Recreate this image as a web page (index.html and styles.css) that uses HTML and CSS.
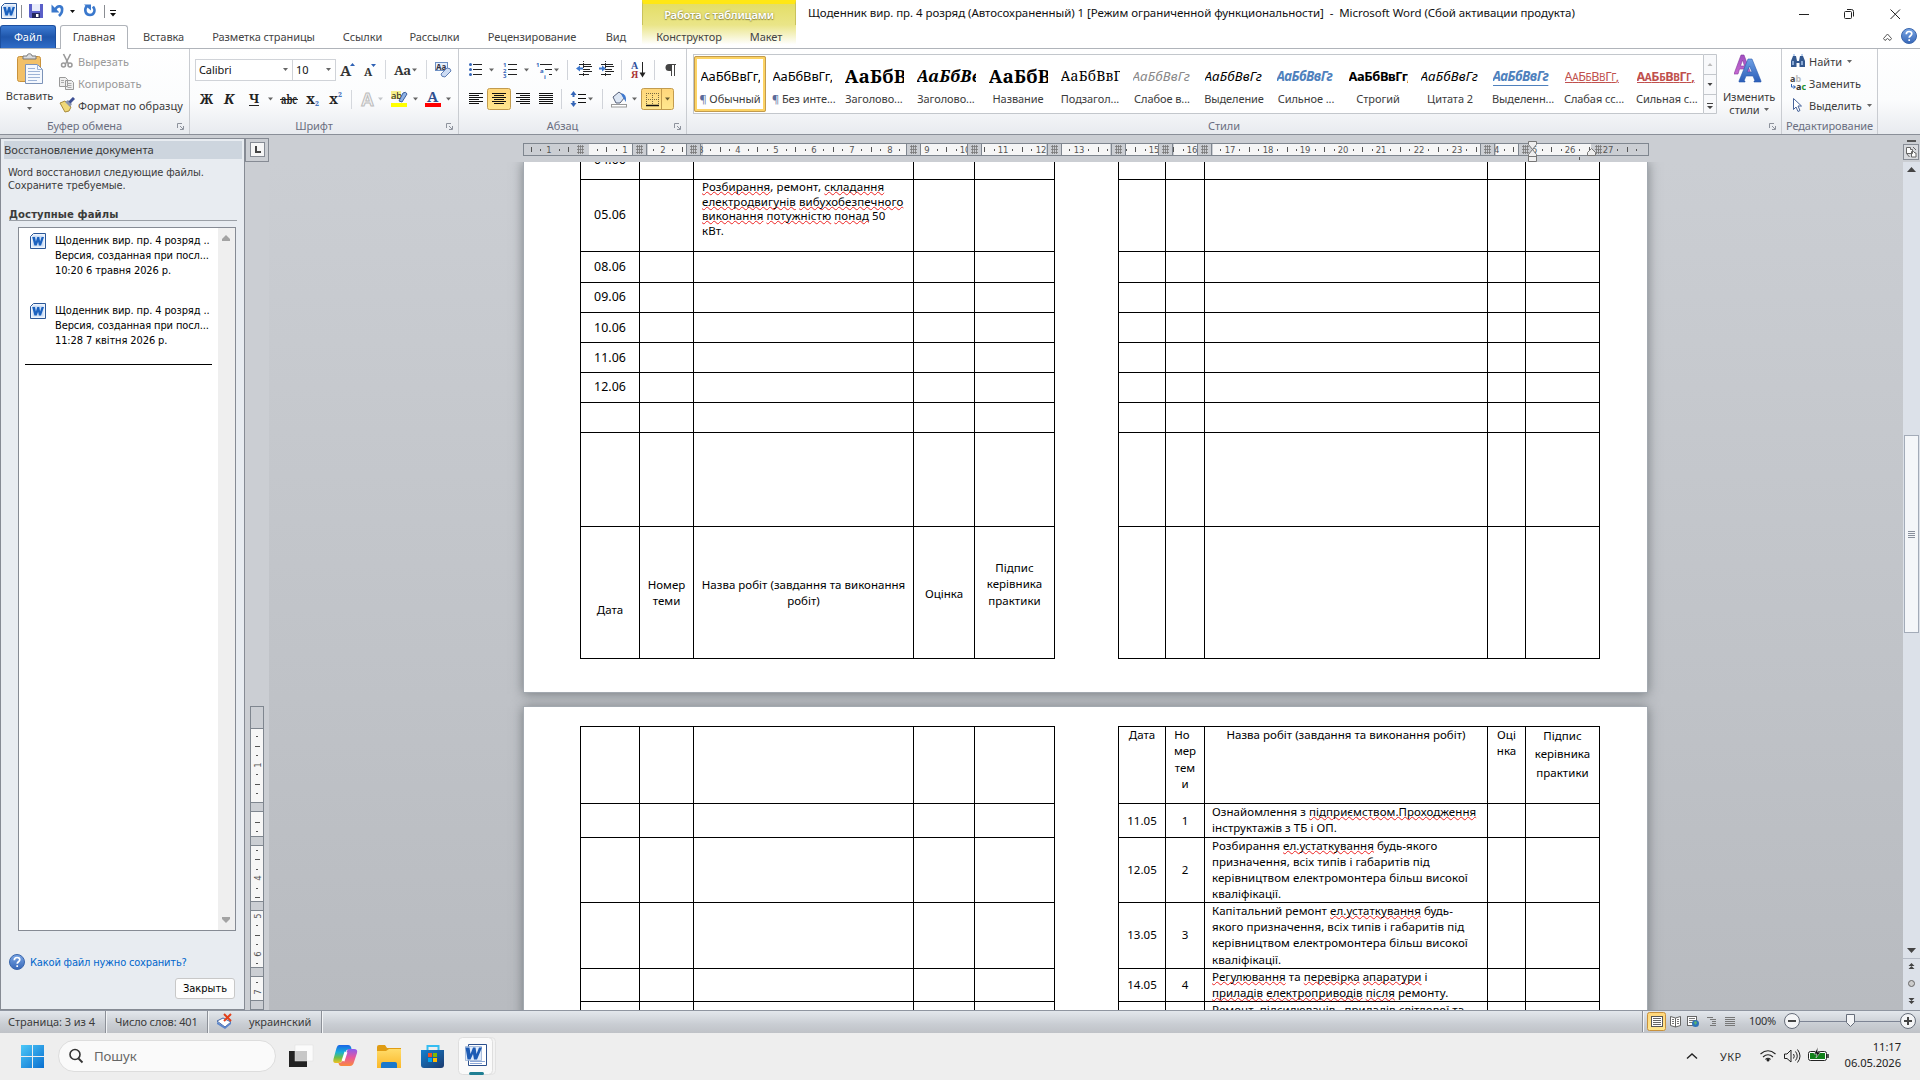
FILE: index.html
```html
<!DOCTYPE html>
<html lang="ru">
<head>
    <meta charset="UTF-8">
    <meta name="viewport" content="width=device-width, initial-scale=1.0">
    <title>Microsoft Word</title>
    <link rel="stylesheet" href="styles.css">
</head>
<body>

    <svg width="0" height="0" class="defs">
        <defs>
            <linearGradient id="gBlue" x1="0" y1="0" x2="0" y2="1"><stop offset="0" stop-color="#6fa0e4"/><stop offset="1" stop-color="#2a5db8"/></linearGradient>
            <linearGradient id="gHelp" x1="0" y1="0" x2="0" y2="1"><stop offset="0" stop-color="#7ba7e6"/><stop offset="1" stop-color="#3767b8"/></linearGradient>
            <linearGradient id="gWin" x1="0" y1="0" x2="1" y2="1"><stop offset="0" stop-color="#4cc8f8"/><stop offset="1" stop-color="#0a6fd0"/></linearGradient>
            <linearGradient id="gPurple" x1="0" y1="0" x2="0" y2="1"><stop offset="0" stop-color="#a04fc0"/><stop offset="1" stop-color="#c86ad0"/></linearGradient>
            <linearGradient id="gOn" x1="0" y1="0" x2="0" y2="1"><stop offset="0" stop-color="#ffd67a"/><stop offset="1" stop-color="#ffe78f"/></linearGradient>
            <linearGradient id="gCopA" x1="0" y1="0" x2="0" y2="1"><stop offset="0" stop-color="#1a63e8"/><stop offset=".4" stop-color="#18b0d8"/><stop offset=".7" stop-color="#6cc04a"/><stop offset="1" stop-color="#f4c020"/></linearGradient>
            <linearGradient id="gCopB" x1="0" y1="0" x2="0" y2="1"><stop offset="0" stop-color="#8a5cf0"/><stop offset=".5" stop-color="#e8589c"/><stop offset="1" stop-color="#fa8a3c"/></linearGradient>
            <linearGradient id="gFolder" x1="0" y1="0" x2="0" y2="1"><stop offset="0" stop-color="#ffdc6a"/><stop offset="1" stop-color="#fbb829"/></linearGradient>
            <linearGradient id="gStore" x1="0" y1="0" x2="1" y2="1"><stop offset="0" stop-color="#1480d0"/><stop offset="1" stop-color="#1b3a6e"/></linearGradient>
            <symbol id="word" viewBox="0 0 16 16">
                <path d="M3.5.5h12v15H.5v-12z" fill="#eef4fc" stroke="#2b5797"/>
                <rect x="2.5" y="2.500" width="11" height="11" fill="#c9dcf5"/>
                <path d="M2.200 4h2.800l.9 4.500L7.300 4h2l.8 4.500L11.600 4H14l-3 8.500H8.900L8.100 8.800 6.700 12.500H4.400z" fill="#1b62c0"/>
            </symbol>
            <symbol id="help" viewBox="0 0 16 16">
                <circle cx="8" cy="8" r="7.500" fill="url(#gHelp)" stroke="#3a66ac"/>
                <path d="M5.300 6.200c0-3.600 5.500-3.500 5.500-.4 0 1.900-2.600 2-2.600 4M8.200 11.200v1.800" fill="none" stroke="#fff" stroke-width="1.700"/>
            </symbol>
            <symbol id="launch" viewBox="0 0 7 7"><path d="M.5 5V.5H5M3 3l3 3M6.500 3v3.500H3" fill="none" stroke="#8d929c"/></symbol>
            <symbol id="dd" viewBox="0 0 5 3"><path d="M0 0h5L2.500 3z" fill="#666"/></symbol>
        </defs>
    </svg>

    <!-- Title bar -->
    <div class="titlebar">
        <svg class="quick" width="642" height="25" viewBox="0 0 642 25">
            <use href="#word" x="1" y="3" width="16" height="16"/>
            <path d="M21.500 5v13M104.500 5v13" stroke="#8a8d92"/>
            <path d="M29 4h14v14H30l-1-1z" fill="#5a5fc8"/><path d="M32 4h8v7h-8z" fill="#e8ecfa"/><path d="M32 13h8v5h-8z" fill="#23275e"/><path d="M36 14h2.500v3H36z" fill="#fff"/>
            <path d="M51.500 4.500v8h8z" fill="#3a78cc"/><path d="M55 10c3-6 8-4 7 1 0 2-1 3-3 5" fill="none" stroke="#3a78cc" stroke-width="2.600"/>
            <path d="M70 10h5l-2.500 3zM110 13h6l-3 3.500z" fill="#111"/><path d="M110 10.500h6" stroke="#111"/>
            <path d="M93 6.500c3 4 1 8.500-3 8.500-5 0-6-6-3-9" fill="none" stroke="#3a78cc" stroke-width="2.600"/><path d="M84 4.500h7v6z" fill="#3a78cc"/>
        </svg>
        <div class="ctx-title">Работа с таблицами</div>
        <div class="doc-title">Щоденник вир. пр. 4 розряд (Автосохраненный) 1 [Режим ограниченной функциональности]&nbsp; -&nbsp; Microsoft Word (Сбой активации продукта)</div>
        <svg class="win-buttons" width="130" height="25" viewBox="1790 0 130 25">
            <path d="M1799 14.500h10M1890.500 9.500l9.500 9.500M1900 9.500l-9.500 9.500" stroke="#222" fill="none"/>
            <path d="M1847 9.500h4.500q2 0 2 2v5" stroke="#222" fill="none"/>
            <rect x="1844.500" y="11.500" width="7" height="7" rx="1" stroke="#222" fill="none"/>
        </svg>
    </div>

    <!-- Tabs -->
    <div class="tabs">
        <div class="tab file">Файл</div>
        <div class="tab active">Главная</div>
        <div class="tab w69">Вставка</div>
        <div class="tab w131">Разметка страницы</div>
        <div class="tab w67">Ссылки</div>
        <div class="tab w77">Рассылки</div>
        <div class="tab w118">Рецензирование</div>
        <div class="tab w50">Вид</div>
        <div class="ctx-tabs">
            <div class="tab w94">Конструктор</div>
            <div class="tab w60">Макет</div>
        </div>
        <svg class="tabs-right" width="40" height="24" viewBox="1880 25 40 24">
            <path d="M1883.500 38.500l4-4.500 4 4.500-1.500 2-2.500-2-2.500 2z" fill="none" stroke="#555"/>
            <use href="#help" x="1901" y="28" width="16" height="16"/>
        </svg>
    </div>

    <!-- Ribbon -->
    <div class="ribbon">
        <div class="group g-clip">
            <div class="tools">
                <div class="big-btn paste">
                    <svg width="30" height="34" viewBox="0 0 30 34">
                        <rect x="2.500" y="3.500" width="23" height="25" rx="2" fill="#f2c068" stroke="#c8923c"/>
                        <path d="M8 6V3h4c0-3 5-3 5 0h4v3z" fill="#d8dade" stroke="#777"/>
                        <path d="M10.500 11.500h12l5 5v14h-17z" fill="#f4f8fe" stroke="#7c93b8"/>
                        <path d="M22.500 11.500v5h5M13 15.500h7M13 18.500h12M13 21.500h12M13 24.500h12M13 27.500h9" fill="none" stroke="#9db3d6"/>
                    </svg>
                    <span>Вставить</span>
                    <svg class="dd" width="5" height="3"><use href="#dd"/></svg>
                </div>
                <div class="small-col">
                    <div class="small-btn off"><svg width="16" height="16"><path d="M4.500 1l5 10M11.500 1l-5 10" stroke="#999" stroke-width="1.600"/><circle cx="4.500" cy="12" r="2" fill="none" stroke="#999" stroke-width="1.500"/><circle cx="11" cy="12" r="2" fill="none" stroke="#999" stroke-width="1.500"/></svg>Вырезать</div>
                    <div class="small-btn off"><svg width="16" height="16"><path d="M.5 2.500h6l2 2v7h-8zM6.500 5.500h6l2 2v7h-8z" fill="#eee" stroke="#999"/><path d="M8.500 8.500h4M8.500 10.500h4M8.500 12.500h4M2 5.500h3M2 7.500h3" stroke="#aaa"/></svg>Копировать</div>
                    <div class="small-btn"><svg width="16" height="16"><path d="M1 6l5-2 6 6-2 4-4 1z" fill="#f0d878" stroke="#a88a3a"/><path d="M6 5l3-2 4 4-2 3z" fill="#8a93b0"/><path d="M10.500 5.500L15 1" stroke="#3c4f94" stroke-width="3"/></svg>Формат по образцу</div>
                </div>
            </div>
            <div class="group-label">Буфер обмена<svg class="launcher" width="7" height="7"><use href="#launch"/></svg></div>
        </div>

        <div class="group g-font">
            <div class="tools rows">
                <div class="font-row">
                    <div class="combo font-name">Calibri<svg width="5" height="3"><use href="#dd"/></svg></div>
                    <div class="combo font-size">10<svg width="5" height="3"><use href="#dd"/></svg></div>
                    <svg width="122" height="22" viewBox="336 59 122 22">
                        <g font-family="Noto Serif, Liberation Serif, serif" font-weight="bold" fill="#333">
                            <text x="340" y="76" font-size="15">A</text>
                            <text x="364" y="76" font-size="11">A</text>
                            <text x="394" y="75" font-size="13" letter-spacing="-.5">Aa</text>
                        </g>
                        <path d="M350 66l2.500-3 2.500 3zM371 64h5l-2.500 3z" fill="#2f62b5"/>
                        <path d="M385.500 60v19M426.500 60v19" stroke="#d5d8dd"/>
                        <path d="M412 68.500h5l-2.500 3z" fill="#666"/>
                        <rect x="435.500" y="62.500" width="12" height="8" fill="#e6effb" stroke="#6d8fc4"/>
                        <text x="436" y="70" font-size="8" font-family="Noto Sans, sans-serif" font-weight="bold" fill="#334">Aa</text>
                        <path d="M441 74l6-6q4 0 4 3l-6 6q-4 0-4-3z" fill="#cddcf4" stroke="#5f7fb6"/>
                    </svg>
                </div>
                <svg class="row-two" width="268" height="24" viewBox="190 87 268 24">
                    <g font-family="Noto Serif, Liberation Serif, serif" font-weight="bold" fill="#222" font-size="14">
                        <text x="200" y="104" textLength="13" lengthAdjust="spacingAndGlyphs">Ж</text>
                        <text x="224" y="104" font-style="italic">К</text>
                        <text x="249" y="103" font-size="13">Ч</text>
                        <text x="281" y="104" font-size="12" textLength="16" lengthAdjust="spacingAndGlyphs">abc</text>
                        <text x="306" y="104">x</text><text x="329" y="104">x</text>
                        <text x="315" y="106" font-size="7" fill="#2f62b5">2</text><text x="338" y="97" font-size="7" fill="#2f62b5">2</text>
                        <text x="427" y="102" font-size="15" fill="#2f4f8f">A</text>
                    </g>
                    <path d="M249 105.500h10M280 99.500h18" stroke="#222"/>
                    <path d="M268 97.500h5l-2.500 3zM413 97.500h5l-2.500 3zM446 97.500h5l-2.500 3z" fill="#666"/>
                    <path d="M378 97.500h5l-2.500 3z" fill="#c4c6ca"/>
                    <path d="M351.500 90v19" stroke="#d5d8dd"/>
                    <text x="361" y="106" font-size="18" font-weight="bold" font-family="Liberation Sans, sans-serif" fill="#f3f3f3" stroke="#bcbcbc">A</text>
                    <path d="M391 91h10v8h-10z" fill="#f6f08a"/>
                    <text x="391" y="99" font-size="9.500" font-family="Noto Sans, sans-serif" fill="#222">ab</text>
                    <path d="M399 101l4-8q3-2 4 1l-5 8z" fill="#8fb2e4" stroke="#3c5e9c"/>
                    <path d="M391 103h16v4h-16z" fill="#ff0"/><path d="M425 103h16v4h-16z" fill="#f00"/>
                </svg>
            </div>
            <div class="group-label">Шрифт<svg class="launcher" width="7" height="7"><use href="#launch"/></svg></div>
        </div>

        <div class="group g-para">
            <svg class="tools" width="227" height="68" viewBox="459 49 227 68">
                <path d="M473 64.500h9M473 69.500h9M473 74.500h9M508 64.500h9M508 69.500h9M508 74.500h9M540 64.500h12M545 69.500h7M549 74.500h3" stroke="#222"/>
                <g fill="#3566b8"><circle cx="470.500" cy="64.500" r="1.500"/><circle cx="470.500" cy="69.500" r="1.500"/><circle cx="470.500" cy="74.500" r="1.500"/></g>
                <g font-family="Noto Sans, sans-serif" font-weight="bold" font-size="6" fill="#3566b8"><text x="503" y="67">1</text><text x="503" y="72.500">2</text><text x="503" y="78">3</text><text x="536" y="67">1</text><text x="540" y="73">a</text><text x="544" y="79">i</text></g>
                <g fill="#666"><path d="M489 68.500h5l-2.500 3zM524 68.500h5l-2.500 3zM554 68.500h5l-2.500 3zM588 97.500h5l-2.500 3zM632 97.500h5l-2.500 3z"/></g>
                <path d="M567.500 60v20M621.500 60v20M654.500 60v20M561.500 89v20M602.500 89v20" stroke="#d0d3d9"/>
                <path d="M579 64.500h12M583 66.500h9M583 69.500h7M583 71.500h9M579 74.500h10M601 64.500h12M605 66.500h9M605 69.500h7M605 71.500h9M601 74.500h10" stroke="#222"/>
                <path d="M583.500 61v16M605.500 61v16" stroke="#333" stroke-dasharray="1 1"/>
                <path d="M576 68.500l4-3v2h3v2h-3v2zM606 68.500l-4-3v2h-3v2h3v2z" fill="#3f79cf"/>
                <g font-family="Liberation Serif, serif" font-weight="bold" font-size="10"><text x="631" y="69" fill="#2f4f9b">A</text><text x="631" y="78" fill="#a33">Я</text></g>
                <path d="M642.500 62v13" stroke="#222"/><path d="M639.500 72.500h6l-3 5z" fill="#222"/>
                <path d="M671.500 64v12M674.500 64v12M669 64.500h7" stroke="#444" fill="none"/><path d="M671 64h-2a3 3 0 0 0 0 7h2z" fill="#444"/>

                <rect x="487.500" y="88.500" width="23" height="21" rx="2" fill="url(#gOn)" stroke="#c29b4e"/>
                <rect x="641.500" y="88.500" width="32" height="21" rx="2" fill="url(#gOn)" stroke="#c29b4e"/>
                <path d="M661.500 89v20" stroke="#c29b4e"/><path d="M665 97.500h5l-2.500 3z" fill="#665a30"/>
                <path d="M469 93.500h14M469 95.500h10M469 97.500h14M469 99.500h10M469 101.500h14M469 103.500h10" stroke="#111"/>
                <path d="M492 93.500h14M494 95.500h10M492 97.500h14M494 99.500h10M492 101.500h14M494 103.500h10" stroke="#111"/>
                <path d="M516 93.500h14M520 95.500h10M516 97.500h14M520 99.500h10M516 101.500h14M520 103.500h10" stroke="#111"/>
                <path d="M539 93.500h14M539 95.500h14M539 97.500h14M539 99.500h14M539 101.500h14M539 103.500h14" stroke="#111"/>
                <path d="M578 94.500h8M578 98.500h8M578 102.500h8" stroke="#111"/>
                <path d="M573.500 91l3 4h-2v2h-2v-2h-2zM573.500 107l3-4h-2v-2h-2v2h-2z" fill="#3566b8"/>
                <path d="M613 97l6-5 6 5-5 6h-4z" fill="#dce6f4" stroke="#555f78"/><path d="M621 93q6 1 5 9l-4-6z" fill="#3f79cf"/>
                <rect x="611.500" y="104.500" width="15" height="2.500" fill="#fff" stroke="#999"/>
                <path d="M646 93.500h13M646 99.500h13M646.500 93v12M652.500 93v12M658.500 93v12" stroke="#7a6a40" stroke-dasharray="1 1"/><path d="M646 105.500h13" stroke="#111" stroke-width="1.500"/>
            </svg>
            <div class="group-label">Абзац<svg class="launcher" width="7" height="7"><use href="#launch"/></svg></div>
        </div>

        <div class="group g-styles">
            <div class="tools">
                <div class="gallery">
                    <div class="style on"><b class="s-norm">АаБбВвГг,</b><span><i>¶</i> Обычный</span></div>
                    <div class="style"><b class="s-norm">АаБбВвГг,</b><span><i>¶</i> Без инте...</span></div>
                    <div class="style"><b class="s-head">АаБбВ</b><span>Заголово...</span></div>
                    <div class="style"><b class="s-head2">АаБбВв</b><span>Заголово...</span></div>
                    <div class="style"><b class="s-head">АаБбВ</b><span>Название</span></div>
                    <div class="style"><b class="s-sub">АаБбВвГ</b><span>Подзагол...</span></div>
                    <div class="style"><b class="s-em s-gray">АаБбВвГг</b><span>Слабое в...</span></div>
                    <div class="style"><b class="s-em">АаБбВвГг</b><span>Выделение</span></div>
                    <div class="style"><b class="s-em s-blue">АаБбВвГг</b><span>Сильное ...</span></div>
                    <div class="style"><b class="s-strong">АаБбВвГг,</b><span>Строгий</span></div>
                    <div class="style"><b class="s-em">АаБбВвГг</b><span>Цитата 2</span></div>
                    <div class="style"><b class="s-em s-blue s-line">АаБбВвГг</b><span>Выделенн...</span></div>
                    <div class="style"><b class="s-ref">А<small>А</small>Б<small>Б</small>В<small>В</small>Г<small>Г</small>,</b><span>Слабая сс...</span></div>
                    <div class="style"><b class="s-ref s-bold">А<small>А</small>Б<small>Б</small>В<small>В</small>Г<small>Г</small>,</b><span>Сильная с...</span></div>
                </div>
                <svg class="gallery-scroll" width="14" height="60" viewBox="0 0 14 60">
                    <path d="M.5.5h13v59H.5zM0 20.500h14M0 40.500h14" fill="#f8f9fb" stroke="#c3c7cc"/>
                    <path d="M4.500 12h5L7 9z" fill="#bbb"/><path d="M4.500 29h5L7 32zM4 52h6l-3 3z" fill="#444"/><path d="M4 49.500h6" stroke="#444"/>
                </svg>
                <div class="big-btn change">
                    <svg width="30" height="30" viewBox="0 0 30 30">
                        <path d="M0 20L7 1h3l7 19h-4l-1.500-5h-6L4 20zM6.500 12h4L8.500 6z" fill="url(#gPurple)" stroke="#83389e" stroke-width=".6"/>
                        <path d="M5 28v-1L14 5h4l9 22v1h-7v-1h1l-2-5h-7l-2 5h1v1zM13 18h5l-2.500-6z" fill="url(#gBlue)" stroke="#2c5cae" stroke-width=".6"/>
                    </svg>
                    <span>Изменить</span>
                    <span>стили <svg width="5" height="3"><use href="#dd"/></svg></span>
                </div>
            </div>
            <div class="group-label">Стили<svg class="launcher" width="7" height="7"><use href="#launch"/></svg></div>
        </div>

        <div class="group g-edit">
            <div class="tools">
                <div class="small-col">
                    <div class="small-btn"><svg width="16" height="16"><path d="M1 14V8l2-5h3l1 5h2l1-5h3l2 5v6H9.500v-4h-3v4z" fill="#33588f"/><path d="M3 8v4M12 8v4M4 1v2M12 1v2" stroke="#a8c4ec" stroke-width="1.500"/></svg>Найти<svg class="dd" width="5" height="3"><use href="#dd"/></svg></div>
                    <div class="small-btn"><svg width="16" height="16"><text x="0" y="7" font-size="9" font-weight="bold" font-family="Noto Sans, sans-serif" fill="#444">a<tspan fill="#bbb">b</tspan></text><text x="6" y="15" font-size="9" font-weight="bold" font-family="Noto Sans, sans-serif" fill="#333">a<tspan fill="#1d8f2f">c</tspan></text><path d="M1.500 9v3H5M3.500 10.500l2 1.500-2 1.500" fill="none" stroke="#2f62b5"/></svg>Заменить</div>
                    <div class="small-btn"><svg width="16" height="16"><path d="M3.500 1.500v11l2.500-2.500 2 4.500 2-1-2-4.500h3.500z" fill="#fff" stroke="#47639a"/></svg>Выделить<svg class="dd" width="5" height="3"><use href="#dd"/></svg></div>
                </div>
            </div>
            <div class="group-label">Редактирование</div>
        </div>
    </div>

    <!-- Work area -->
    <div class="work">
        <div class="pane">
            <div class="pane-head">Восстановление документа</div>
            <p class="pane-text">Word восстановил следующие файлы. Сохраните требуемые.</p>
            <div class="pane-sub">Доступные файлы</div>
            <div class="file-box">
                <div class="files">
                    <div class="file-item">
                        <svg width="16" height="16"><use href="#word"/></svg>
                        <div>Щоденник вир. пр. 4 розряд ..<br>Версия, созданная при посл...<br>10:20 6 травня 2026 р.</div>
                    </div>
                    <div class="file-item">
                        <svg width="16" height="16"><use href="#word"/></svg>
                        <div>Щоденник вир. пр. 4 розряд ..<br>Версия, созданная при посл...<br>11:28 7 квітня 2026 р.</div>
                    </div>
                    <div class="files-line"></div>
                </div>
                <div class="files-scroll">
                    <svg width="10" height="6"><path d="M5 0l4 4v2H1V4z" fill="#a3a3a3"/></svg>
                    <svg width="10" height="6"><path d="M5 6l4-4V0H1v2z" fill="#a3a3a3"/></svg>
                </div>
            </div>
            <div class="pane-help"><svg width="16" height="16"><use href="#help"/></svg>Какой файл нужно сохранить?</div>
            <button class="close-btn">Закрыть</button>
        </div>

        <div class="vruler-col">
            <svg width="24" height="24" class="tab-kind"><rect x=".5" y=".5" width="23" height="23" fill="#cbced3" stroke="#868b94"/><rect x="5.500" y="4.500" width="14" height="14" fill="#f6f6f6" stroke="#868b94"/><path d="M11 8v6h5" fill="none" stroke="#444" stroke-width="2"/></svg>
            <svg id="vruler" class="vruler" width="24" height="304" viewBox="245 706 24 304"></svg>
        </div>

        <div class="canvas">
            <svg id="hruler" class="hruler" width="1634" height="27" viewBox="269 135 1634 27"></svg>
            <div class="view">
                <div class="page page-one">
                    <table class="left no-top">
                        <tr class="h18"><td><div class="cut">04.06</div></td><td></td><td></td><td></td><td></td></tr>
                        <tr class="h72"><td>05.06</td><td></td><td class="task tight"><u>Розбирання</u>, ремонт, <u>складання</u><br><u>електродвигунів</u> <u>вибухобезпечного</u><br><u>виконання</u> <u>потужністю</u> <u>понад</u> 50<br>кВт.</td><td></td><td></td></tr>
                        <tr class="h31"><td>08.06</td><td></td><td></td><td></td><td></td></tr>
                        <tr class="h30"><td>09.06</td><td></td><td></td><td></td><td></td></tr>
                        <tr class="h30 low"><td>10.06</td><td></td><td></td><td></td><td></td></tr>
                        <tr class="h30 low"><td>11.06</td><td></td><td></td><td></td><td></td></tr>
                        <tr class="h30"><td>12.06</td><td></td><td></td><td></td><td></td></tr>
                        <tr class="h30"><td></td><td></td><td></td><td></td><td></td></tr>
                        <tr class="h94"><td></td><td></td><td></td><td></td><td></td></tr>
                        <tr class="h132 head"><td class="p75">Дата</td><td class="p50">Номер<br>теми</td><td class="p50">Назва робіт (завдання та виконання<br>робіт)</td><td class="p59">Оцінка</td><td class="p33">Підпис<br>керівника<br>практики</td></tr>
                    </table>
                    <table class="right no-top">
                        <tr class="h18"><td></td><td></td><td></td><td></td><td></td></tr>
                        <tr class="h72"><td></td><td></td><td></td><td></td><td></td></tr>
                        <tr class="h31"><td></td><td></td><td></td><td></td><td></td></tr>
                        <tr class="h30"><td></td><td></td><td></td><td></td><td></td></tr>
                        <tr class="h30"><td></td><td></td><td></td><td></td><td></td></tr>
                        <tr class="h30"><td></td><td></td><td></td><td></td><td></td></tr>
                        <tr class="h30"><td></td><td></td><td></td><td></td><td></td></tr>
                        <tr class="h30"><td></td><td></td><td></td><td></td><td></td></tr>
                        <tr class="h94"><td></td><td></td><td></td><td></td><td></td></tr>
                        <tr class="h132"><td></td><td></td><td></td><td></td><td></td></tr>
                    </table>
                </div>
                <div class="page page-two">
                    <table class="left">
                        <tr class="h77"><td></td><td></td><td></td><td></td><td></td></tr>
                        <tr class="h34"><td></td><td></td><td></td><td></td><td></td></tr>
                        <tr class="h65"><td></td><td></td><td></td><td></td><td></td></tr>
                        <tr class="h66"><td></td><td></td><td></td><td></td><td></td></tr>
                        <tr class="h33"><td></td><td></td><td></td><td></td><td></td></tr>
                        <tr class="h34"><td></td><td></td><td></td><td></td><td></td></tr>
                    </table>
                    <table class="right">
                        <tr class="h77 head"><td>Дата</td><td>Но&nbsp;&nbsp;<br>мер<br>тем<br>и</td><td>Назва робіт (завдання та виконання робіт)</td><td>Оці<br>нка</td><td class="loose">Підпис<br>керівника<br>практики</td></tr>
                        <tr class="h34 low"><td>11.05</td><td>1</td><td class="task">Ознайомлення з <u>підприємством.Проходження</u><br>інструктажів з ТБ і ОП.</td><td></td><td></td></tr>
                        <tr class="h65 low"><td>12.05</td><td>2</td><td class="task four">Розбирання <u>ел.устаткування</u> будь-якого<br>призначення, всіх типів і габаритів під<br>керівництвом електромонтера більш високої<br>кваліфікації.</td><td></td><td></td></tr>
                        <tr class="h66"><td>13.05</td><td>3</td><td class="task">Капітальний ремонт <u>ел.устаткування</u> будь-<br>якого призначення, всіх типів і габаритів під<br>керівництвом електромонтера більш високої<br>кваліфікації.</td><td></td><td></td></tr>
                        <tr class="h33"><td>14.05</td><td>4</td><td class="task four"><u>Регулювання</u> та <u>перевірка</u> <u>апаратури</u> і<br><u>приладів</u> <u>електроприводів</u> <u>після</u> ремонту.</td><td></td><td></td></tr>
                        <tr class="h34"><td></td><td></td><td class="task">Ремонт&nbsp; підсилювачів,&nbsp; приладів світлової та</td><td></td><td></td></tr>
                    </table>
                </div>
            </div>
        </div>

        <svg class="vscroll" width="17" height="875" viewBox="1903 135 17 875">
            <rect x="1903" y="135" width="17" height="875" fill="#dce1e9"/>
            <path d="M1903 135h17v27h-17z" fill="#cbced3"/>
            <path d="M1907 141h9" stroke="#555" stroke-width="2"/>
            <rect x="1903.500" y="144.500" width="15" height="15" fill="#d8dade" stroke="#868b94"/><path d="M1906.500 147.500h4v2h2v4h-6zM1911.500 151.500h2l1.500 1.500h1v4h-4.500z" fill="#fff" stroke="#666"/><path d="M1906.500 153.500l3 3.500M1913 147l3 3" stroke="#666"/>
            <path d="M1907 172h9l-4.500-5z" fill="#444"/>
            <rect x="1904.500" y="435.500" width="14" height="197" fill="#f4f6f9" stroke="#a3abb8"/>
            <path d="M1908 531.500h7M1908 533.500h7M1908 535.500h7M1908 537.500h7" stroke="#888f9c"/>
            <path d="M1907 948h9l-4.500 5z" fill="#444"/>
            <path d="M1903 958.500h17" stroke="#b5bbc6"/>
            <path d="M1908.500 966h6l-3-3zM1908.500 969h6l-3-3zM1908.500 998h6l-3 3zM1908.500 1001h6l-3 3z" fill="#444"/>
            <circle cx="1911.500" cy="983.500" r="3" fill="#ccc" stroke="#666"/>
        </svg>
    </div>

    <!-- Status bar -->
    <div class="status">
        <div class="st st-page">Страница: 3 из 4</div>
        <div class="st st-words">Число слов: 401</div>
        <div class="st st-lang">
            <svg width="18" height="16"><path d="M1 8l6-3 8 4-6 5z" fill="#fff" stroke="#4468a8"/><path d="M1 9l8 5 6-5v2l-6 5-8-5z" fill="#5b85cc"/><path d="M8 1l7 7M15 1L8 8" stroke="#e2401c" stroke-width="2"/></svg>
            украинский
        </div>
        <svg class="st-right" width="280" height="23" viewBox="1640 1010 280 23">
            <path d="M1642.500 1011v21" stroke="#8c9098"/><path d="M1643.500 1011v21" stroke="#f2f4f6"/>
            <rect x="1647.500" y="1012.500" width="18" height="18" rx="2" fill="url(#gOn)" stroke="#c8913c"/>
            <rect x="1651.500" y="1016.500" width="11" height="10" fill="#fff" stroke="#555"/><path d="M1653 1018.500h8M1653 1020.500h8M1653 1022.500h8M1653 1024.500h8" stroke="#666"/>
            <path d="M1670.500 1016.500l5 1.500 5-1.500v9l-5 1.500-5-1.500zM1675.500 1018v9" fill="#fff" stroke="#666"/><path d="M1672 1019.500h2M1672 1021.500h2M1672 1023.500h2M1677 1019.500h2M1677 1021.500h2M1677 1023.500h2" stroke="#777"/>
            <rect x="1687.500" y="1016.500" width="9" height="9" fill="#fff" stroke="#666"/><path d="M1689 1018.500h6M1689 1020.500h6M1689 1022.500h4" stroke="#777"/><circle cx="1695.500" cy="1023.500" r="3.500" fill="#2f74b8"/><path d="M1694 1022l2-1 1 2-2 2z" fill="#5ab46a"/>
            <path d="M1707 1017.500h6M1710 1019.500h6M1712 1021.500h4M1712 1023.500h4M1710 1025.500h6" stroke="#777"/>
            <path d="M1725 1017.500h10M1725 1019.500h10M1725 1021.500h10M1725 1023.500h10M1725 1025.500h10" stroke="#777"/>
            <text x="1749" y="1025" class="svg-ui" textLength="27">100%</text>
            <path d="M1800 1021.500h100" stroke="#7d8494"/>
            <circle cx="1792" cy="1021" r="7.500" fill="#f3f4f6" stroke="#666d7a"/><path d="M1788 1021h8" stroke="#444" stroke-width="2"/>
            <circle cx="1908" cy="1021" r="7.500" fill="#f3f4f6" stroke="#666d7a"/><path d="M1904 1021h8M1908 1017v8" stroke="#444" stroke-width="2"/>
            <path d="M1846.500 1014.500h8v8l-4 4-4-4z" fill="#f3f4f6" stroke="#666d7a"/>
        </svg>
    </div>

    <!-- Taskbar -->
    <div class="taskbar">
        <svg class="start" width="23" height="23"><path d="M0 0h11v11H0zM12 0h11v11H12zM0 12h11v11H0zM12 12h11v11H12z" fill="url(#gWin)"/></svg>
        <div class="search">
            <svg width="16" height="16"><circle cx="7" cy="6.500" r="5" fill="none" stroke="#333" stroke-width="1.600"/><path d="M10.500 10.500l4 4" stroke="#333" stroke-width="1.800"/></svg>
            Пошук
        </div>
        <svg class="apps" width="220" height="47" viewBox="280 1033 220 47">
            <rect x="289" y="1051" width="18" height="16" fill="#222"/><rect x="295" y="1045" width="18" height="16" fill="#fff" fill-opacity=".75" stroke="#ddd" stroke-width=".5"/>
            <path d="M339 1045h9q3 0 3.500 4l-5 1-4 10q-1 3-4 3h-3q-3 0-2-4l3-11q1-3 2.500-3z" fill="url(#gCopA)"/>
            <path d="M348 1049h6q4 0 3 4l-3 9q-1 4-4 4h-9q-2 0-2.500-3 4 0 5-4z" fill="url(#gCopB)"/>
            <path d="M346 1052l-3 9" stroke="#fff" stroke-width="3"/>
            <path d="M377 1047q0-2 2-2h6l2 3h14v5h-24z" fill="#e09c13"/><path d="M377 1051h9l3-2h12v19h-24z" fill="url(#gFolder)"/><path d="M381 1068v-4q0-2 2-2h12q2 0 2 2v4z" fill="#1a78cc"/>
            <path d="M427.500 1050v-4h11v4" fill="none" stroke="#35bdf2" stroke-width="2"/><path d="M421 1050h23v15q0 3-3 3h-17q-3 0-3-3z" fill="url(#gStore)"/>
            <path d="M428 1053h4v4h-4z" fill="#f25022"/><path d="M433 1053h4v4h-4z" fill="#7fba00"/><path d="M428 1058h4v4h-4z" fill="#00a4ef"/><path d="M433 1058h4v4h-4z" fill="#ffb900"/>
            <rect x="461.500" y="1037.500" width="34" height="37" rx="4" fill="#f3f3f3" stroke="#e2e2e2"/>
            <rect x="458.500" y="1037.500" width="34" height="37" rx="4" fill="#fafafa" stroke="#dedede"/>
            <path d="M468.500 1044.500h18v21h-18z" fill="#fff" stroke="#2b4f8c"/><path d="M470 1061.500h15M470 1063.500h12" stroke="#8aa6d6"/>
            <path d="M465.500 1046.500h16v14h-16z" fill="#dfeafa" stroke="#7c9ac8" stroke-width=".6"/>
            <path d="M465.500 1047.500h4l1 6.500 2.500-6.500h2.500l1 6.500 2.500-6.500h3l-5 12h-3l-1-5.500-2.500 5.500h-3z" fill="#1d5bb4"/>
            <rect x="469" y="1072" width="15" height="3" rx="1.500" fill="#1f7f93"/>
        </svg>
        <svg class="tray" width="150" height="47" viewBox="1684 1033 150 47">
            <path d="M1687 1058.500l5-4.500 5 4.500" fill="none" stroke="#222" stroke-width="1.400"/>
            <text x="1720" y="1061" class="svg-ui" textLength="21">УКР</text>
            <path d="M1760.500 1054q7.500-6.500 15 0M1763 1057q5-4.500 10 0M1765.500 1059.500q2.500-2.500 5 0" fill="none" stroke="#222" stroke-width="1.100"/><circle cx="1768" cy="1060" r="1.500" fill="#222"/>
            <path d="M1784.500 1054v4.500h2.500l4 3.500v-12l-4 4z" fill="none" stroke="#222"/><path d="M1793.500 1054q1.500 2.200 0 4.500M1795.500 1051.500q3.500 4.700 0 9M1797.500 1049.500q5 6.700 0 13" fill="none" stroke="#222"/>
            <rect x="1808.500" y="1051.500" width="18" height="9" rx="2" fill="#fff" stroke="#222"/><rect x="1810" y="1053" width="15" height="6" fill="#12801a"/><path d="M1828 1054v4" stroke="#222" stroke-width="1.500"/><path d="M1818 1047l-4 7h3l-1 4 4.500-6h-3z" fill="#111" stroke="#fff" stroke-width=".5"/>
        </svg>
        <div class="clock">11:17<br>06.05.2026</div>
    </div>

    <script>
        // Rulers: one centimetre is 37.8px, marks every quarter
        const CM = 37.8;

        function drawHorizontal() {
            const start = 587.2;
            const white = [[589, 632], [648, 687], [703, 907], [921, 967], [982, 1046], [1062, 1110], [1126, 1158], [1174, 1197], [1213, 1480], [1496, 1518], [1534, 1591]];
            const marks = [639, 693, 913, 974, 1054, 1118, 1165, 1204, 1487, 1525];
            let s = '<rect x="523.5" y="143.5" width="1125" height="12" fill="#cbced3" stroke="#7f868f"/>';
            white.forEach(([a, b]) => { s += `<rect x="${a}" y="144" width="${b - a}" height="11" fill="#f6f6f6"/>`; });
            s += '<g class="ruler-num">';
            for (let q = -6; q <= 111; q++) {
                const x = Math.round(start + q * CM / 4);
                if (q === 0 || q === -1) continue;
                if (q % 4 === 0) {
                    // labels that fall under a column marker are left out
                    if (!marks.some(m => Math.abs(m - x) < 6)) s += `<text x="${x}" y="153">${Math.abs(q / 4)}</text>`;
                }
                else if (q % 2 === 0) s += `<rect x="${x}" y="147" width="1" height="5"/>`;
                else s += `<rect x="${x}" y="149" width="1" height="2"/>`;
            }
            s += '</g>';
            marks.forEach(m => {
                s += `<rect x="${m - 6.5}" y="143.5" width="14" height="12" fill="#cbced3" stroke="#7f868f"/>`;
            });
            marks.concat([580, 1598]).forEach(m => {
                s += `<path d="M${m - 3} 146.500h7M${m - 3} 149.500h7M${m - 3} 152.500h7M${m - 1.5} 145v9M${m + .5} 145v9M${m + 2.5} 145v9" stroke="#777" stroke-width=".8" fill="none"/>`;
            });
            // indent markers of the current cell
            s += '<path d="M1528.500 141.500h8v3l-4 5 4 5v7h-8v-7l4-5-4-5zM1528.500 156.500h8" fill="#eee" stroke="#777"/>';
            s += '<path d="M1587.500 155.500v-3l4-4 4 4v3z" fill="#eee" stroke="#777"/><rect x="1579" y="157" width="1" height="3" fill="#555"/>';
            document.getElementById('hruler').innerHTML = s;
        }

        function drawVertical() {
            const white = [[728, 802], [811, 836], [845, 901], [910, 967], [976, 1000]];
            let s = '<rect x="250.5" y="706.5" width="13" height="303" fill="#cbced3" stroke="#7f868f"/>';
            white.forEach(([a, b]) => {
                s += `<rect x="250.5" y="${a + .5}" width="13" height="${b - a}" fill="#f6f6f6" stroke="#7f868f"/>`;
            });
            s += '<g class="ruler-num">';
            for (let q = 1; q < 30; q++) {
                const y = Math.round(727 + q * CM / 4);
                if (!white.some(([a, b]) => y > a + 1 && y < b - 1)) continue;
                if (q % 4 === 0) s += `<text transform="translate(260.5 ${y}) rotate(-90)">${q / 4}</text>`;
                else if (q % 2 === 0) s += `<rect x="255" y="${y}" width="5" height="1"/>`;
                else s += `<rect x="256" y="${y}" width="2" height="1"/>`;
            }
            s += '</g>';
            document.getElementById('vruler').innerHTML = s;
        }

        drawHorizontal();
        drawVertical();
    </script>

</body>
</html>
```
FILE: styles.css
```css
* {
    box-sizing: border-box;
}
body {
    margin: 0;
    width: 1920px;
    height: 1080px;
    overflow: hidden;
    background: #fff;
    color: #3b3b3b;
    font: 11px "Noto Sans", sans-serif;
    letter-spacing: -0.08px;
    display: flex;
    flex-direction: column;
}
svg {
    display: block;
    flex: none;
}
.defs {
    position: absolute;
}
.svg-ui {
    font: 11px "Noto Sans", sans-serif;
    fill: #333;
}

/* title bar and tabs */
.titlebar {
    display: flex;
    height: 25px;
}
.ctx-title {
    width: 154px;
    border: solid #c9c25c;
    border-width: 0 1px;
    border-top: 4px solid #ffe714;
    background: linear-gradient(#e4de66, #eae588);
    color: #fff;
    text-align: center;
    line-height: 22px;
    font-weight: 600;
    font-size: 11.2px;
    letter-spacing: -0.2px;
    text-shadow: 0 1px 1px #8f8a40, 0 0 2px #a39c4a;
}
.doc-title {
    flex: 1;
    padding-left: 12px;
    line-height: 25px;
    font-size: 11.5px;
    letter-spacing: -0.05px;
    color: #111;
    white-space: nowrap;
}
.tabs {
    display: flex;
    height: 24px;
    border-bottom: 1px solid #b0b4ba;
}
.tab {
    line-height: 24px;
    text-align: center;
    color: #444;
}
.tab.file {
    width: 56px;
    height: 23px;
    margin-right: 4px;
    border: 1px solid #1c4f9f;
    border-bottom: 0;
    border-radius: 3px 3px 0 0;
    background: linear-gradient(#3d7bd2, #1f56ab 50%, #2f6cc8);
    color: #fff;
    line-height: 22px;
}
.tab.active {
    width: 68px;
    height: 24px;
    margin-right: 1px;
    border: 1px solid #b0b4ba;
    border-bottom: 0;
    border-radius: 3px 3px 0 0;
    background: #fff;
    line-height: 22px;
}
.w50 { width: 50px; margin-right: 1px; }
.w60 { width: 60px; }
.w67 { width: 67px; }
.w69 { width: 69px; }
.w77 { width: 77px; }
.w94 { width: 94px; }
.w118 { width: 118px; }
.w131 { width: 131px; }
.ctx-tabs {
    display: flex;
    width: 154px;
    height: 23px;
    background: linear-gradient(#eae588, #fff 85%);
}
.ctx-tabs .tab {
    margin: 0;
}
.tabs-right {
    margin-left: auto;
}

/* ribbon */
.ribbon {
    display: flex;
    height: 86px;
    border-bottom: 1px solid #8a8f98;
    background: linear-gradient(#fff, #fbfcfd 60%, #e8ebef);
}
.group {
    display: flex;
    flex-direction: column;
    border-right: 1px solid #c9ccd1;
}
.g-clip { width: 190px; }
.g-font { width: 269px; }
.g-para { width: 228px; }
.g-styles { width: 1095px; }
.g-edit { width: 96px; }
.tools {
    display: flex;
    height: 68px;
}
.group-label {
    position: relative;
    height: 17px;
    line-height: 18px;
    padding-right: 20px;
    text-align: center;
    color: #6a6e80;
}
.g-edit .group-label {
    padding: 0;
}
.launcher {
    position: absolute;
    right: 5px;
    top: 6px;
}
.big-btn {
    display: flex;
    flex-direction: column;
    align-items: center;
    line-height: 13px;
}
.big-btn span {
    display: flex;
    align-items: center;
    gap: 4px;
}
.paste {
    width: 58px;
    padding: 4px 0 0 1px;
}
.paste span {
    margin: 2px 0 5px;
}
.small-col {
    display: flex;
    flex-direction: column;
    padding: 1px 0 0 1px;
}
.small-btn {
    display: flex;
    align-items: center;
    height: 22px;
    gap: 3px;
    letter-spacing: 0.03px;
    white-space: nowrap;
}
.small-btn .dd {
    margin-left: 2px;
}
.off {
    color: #9a9a9a;
}
.rows {
    flex-direction: column;
}
.font-row {
    display: flex;
    padding: 10px 0 0 5px;
}
.row-two {
    margin-top: 6px;
}
.combo {
    display: flex;
    align-items: center;
    justify-content: space-between;
    height: 22px;
    padding: 0 4px 1px 3px;
    border: 1px solid #d0d3d8;
    background: #fff;
    color: #111;
}
.font-name { width: 98px; }
.font-size { width: 43px; border-left: 0; }
.gallery {
    display: flex;
    width: 1010px;
    height: 60px;
    margin: 5px 0 0 6px;
    border: 1px solid #c3c7cc;
    border-right: 0;
    background: #fff;
}
.style {
    width: 72px;
    height: 56px;
    margin-top: 1px;
    padding: 7px 6px 0;
    text-align: center;
    white-space: nowrap;
}
.style.on {
    border: 3px solid #fcd364;
    outline: 1px solid #c29b4e;
    outline-offset: -1px;
    border-radius: 2px;
    padding: 4px 2px 0;
}
.style b {
    display: block;
    width: 59px;
    height: 25px;
    margin: 0 auto;
    overflow: hidden;
    text-align: left;
    font-weight: normal;
    color: #000;
    line-height: 27px;
}
.style span {
    display: block;
    line-height: 21px;
}
.style span i {
    color: #5a6a9a;
    font-style: normal;
}
.s-norm, .s-strong, .s-em, .s-ref {
    font-size: 12.9px;
    letter-spacing: -0.1px;
}
.style .s-em {
    font-size: 13.4px;
    letter-spacing: 0.1px;
}
.style .s-head, .style .s-head2 {
    font: bold 18.6px/26px "Noto Serif", "DejaVu Serif", serif;
    letter-spacing: 0.3px;
}
.style .s-head2 {
    font-size: 16.4px;
    font-style: italic;
}
.style .s-sub {
    font: 14px/26px "Noto Serif", "DejaVu Serif", serif;
    letter-spacing: 0.2px;
}
.s-em { font-style: italic; }
.style .s-strong, .style .s-bold { font-weight: bold; letter-spacing: -0.4px; }
.style .s-gray { color: #888; }
.style .s-blue { color: #4f81bd; font-weight: bold; letter-spacing: -0.5px; }
.style .s-line { text-decoration: underline; text-underline-offset: 4px; }
.style .s-ref {
    color: #c0504d;
    text-decoration: underline;
    font-size: 12.6px;
    letter-spacing: -0.4px;
}
.s-ref small {
    font-size: 10px;
}
.gallery-scroll {
    margin-top: 5px;
}
.change {
    width: 64px;
    padding-top: 5px;
}
.change span:first-of-type {
    margin-top: 6px;
}
.g-edit .small-col {
    padding-left: 8px;
}

/* work area */
.work {
    display: flex;
    height: 875px;
    background: #cbced3;
}
.pane {
    width: 245px;
    height: 872px;
    margin-top: 3px;
    padding: 2px 2px 0 3px;
    border: 1px solid #868b94;
    background: #e8ecf1;
    font-family: "DejaVu Sans Condensed", sans-serif;
    letter-spacing: -0.11px;
}
.pane-head {
    height: 18px;
    background: #cdd5de;
    font: 11.2px/18px "Noto Sans", sans-serif;
    letter-spacing: 0;
}
.pane-text {
    margin: 7px 0 0 4px;
    width: 225px;
    line-height: 13px;
}
.pane-sub {
    width: 228px;
    margin: 14px 0 0 5px;
    height: 15px;
    line-height: 17px;
    border-bottom: 1px solid #9a9fa6;
    font-weight: bold;
    font-size: 11.2px;
    letter-spacing: 0.1px;
}
.file-box {
    display: flex;
    width: 218px;
    height: 704px;
    margin: 6px 0 0 14px;
    border: 1px solid #868b94;
    background: #fff;
    color: #000;
}
.files {
    flex: 1;
    padding: 5px 0 0 11px;
}
.file-item {
    display: flex;
    gap: 9px;
    height: 70px;
    line-height: 15px;
    white-space: nowrap;
}
.files-line {
    width: 187px;
    margin: -9px 0 0 -5px;
    border-top: 1px solid #000;
}
.files-scroll {
    width: 17px;
    padding: 7px 3px;
    background: #efefef;
    display: flex;
    flex-direction: column;
    justify-content: space-between;
}
.pane-help {
    display: flex;
    align-items: center;
    gap: 5px;
    height: 16px;
    margin: 23px 0 0 5px;
    color: #0066cc;
    letter-spacing: -0.18px;
}
.close-btn {
    display: block;
    width: 60px;
    height: 21px;
    margin: 8px 0 0 171px;
    padding: 0;
    border: 1px solid #c8c8c8;
    border-radius: 3px;
    background: #fdfdfd;
    color: #000;
    font: 11px "DejaVu Sans Condensed", sans-serif;
    letter-spacing: 0;
}
.vruler-col {
    width: 24px;
    padding-top: 3px;
}
.vruler {
    margin-top: 544px;
}
.ruler-num {
    font: 9.4px "DejaVu Sans Condensed", sans-serif;
    text-anchor: middle;
    fill: #555;
}
.canvas {
    width: 1634px;
}
.view {
    height: 848px;
    padding-left: 255px;
    overflow: hidden;
    background: linear-gradient(#cbced3, #b8bbc0);
}
.page {
    display: flex;
    gap: 63px;
    align-items: flex-start;
    width: 1123px;
    padding-left: 56px;
    background: #fff;
    box-shadow: 0 0 0 1px #a3a9b0, 0 1px 11px 1px rgba(70, 76, 80, 0.6);
    color: #000;
}
.page-one {
    height: 530px;
}
.page-two {
    height: 400px;
    margin-top: 15px;
    padding-top: 19px;
}
table {
    table-layout: fixed;
    border-collapse: separate;
    border-spacing: 0;
    border: solid #000;
    border-width: 1px 0 0 1px;
    font-size: 11.5px;
    letter-spacing: 0.02px;
    line-height: 16.4px;
}
.no-top {
    border-top: 0;
}
td {
    padding: 0;
    border: solid #000;
    border-width: 0 1px 1px 0;
    text-align: center;
    vertical-align: middle;
    white-space: nowrap;
}
.left { width: 475px; }
.left td:nth-child(1) { width: 59px; font-size: 12.4px; }
.left td:nth-child(2) { width: 54px; }
.left td:nth-child(3) { width: 220px; }
.left td:nth-child(4) { width: 61px; }
.left td:nth-child(5) { width: 80px; }
.right { width: 482px; }
.right td:nth-child(1) { width: 47px; }
.right td:nth-child(2) { width: 39px; }
.right td:nth-child(3) { width: 283px; }
.right td:nth-child(4) { width: 38px; }
.right td:nth-child(5) { width: 74px; }
.h18 td { height: 18px; vertical-align: top; }
.h30 td { height: 30px; }
.h31 td { height: 31px; }
.h33 td { height: 33px; }
.h34 td { height: 34px; }
.h65 td { height: 65px; }
.h66 td { height: 66px; }
.h72 td { height: 72px; }
.h77 td { height: 77px; }
.h94 td { height: 94px; }
.h132 td { height: 132px; }
.low td { padding-top: 1px; }
.cut {
    height: 16px;
    margin-top: -10px;
}
.head td, .left .head td:first-child {
    vertical-align: top;
    font-size: 11.5px;
}
.head .p33 { padding-top: 33px; }
.head .p50 { padding-top: 50px; }
.head .p59 { padding-top: 59px; }
.head .p75 { padding-top: 75px; }
.head .loose { line-height: 18.4px; }
td.task {
    padding: 0 0 0 7px;
    text-align: left;
    vertical-align: top;
    letter-spacing: 0.06px;
    line-height: 16.2px;
}
td.four {
    line-height: 16px;
}
td.tight {
    padding-left: 8px;
    line-height: 14.6px;
    letter-spacing: 0.09px;
}
td u {
    text-decoration: underline wavy #e22 0.8px;
    text-underline-offset: 0;
    text-decoration-skip-ink: none;
}

/* status bar */
.status {
    display: flex;
    height: 23px;
    border-top: 1px solid #8f95a0;
    background: linear-gradient(#e3e7ec, #c9cdd3 60%, #bfc2c7);
}
.st {
    display: flex;
    align-items: center;
    padding-bottom: 2px;
    border-right: 1px solid #8c9098;
    box-shadow: 1px 0 #f2f4f6;
    letter-spacing: -0.05px;
}
.st-page { width: 106px; padding-left: 8px; }
.st-words { width: 102px; padding-left: 9px; letter-spacing: -0.15px; }
.st-lang { width: 114px; padding-left: 8px; gap: 15px; }
.st-right {
    margin: -1px 0 0 auto;
}

/* taskbar */
.taskbar {
    display: flex;
    height: 47px;
    background: #eee;
}
.start {
    margin: 12px 0 0 21px;
}
.search {
    display: flex;
    align-items: center;
    gap: 10px;
    width: 218px;
    height: 32px;
    margin: 7px 4px 0 14px;
    padding: 0 0 1px 9px;
    border: 1px solid #ddd;
    border-radius: 16px;
    background: #fafafa;
    color: #666;
    font-size: 13.2px;
}
.tray {
    margin-left: auto;
}
.clock {
    width: 67px;
    margin-right: 19px;
    padding-top: 6px;
    text-align: right;
    line-height: 16px;
    font-size: 11.2px;
    color: #222;
}
```
